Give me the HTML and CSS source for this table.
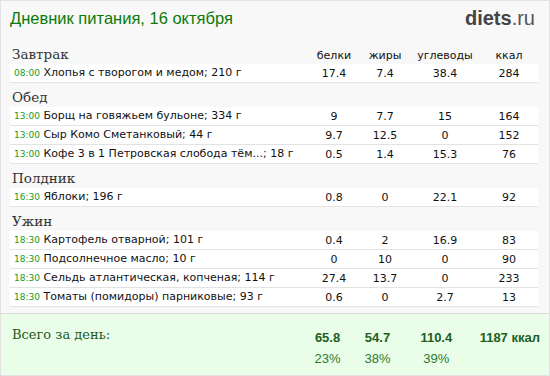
FILE: index.html
```html
<!DOCTYPE html>
<html>
<head>
<meta charset="utf-8">
<link rel="stylesheet" href="styles.css">
</head>
<body>
<div class="card">
  <div class="top">
    <div class="title">Дневник питания, 16 октября</div>
    <div class="logo"><b>diets</b>.ru</div>
  </div>
  <table class="diary">
    <tr class="meal-head">
      <td class="meal">Завтрак</td>
      <td class="colh">белки</td><td class="colh">жиры</td><td class="colh">углеводы</td><td class="colh">ккал</td>
    </tr>
    <tr class="item"><td class="name"><span class="time">08:00</span> Хлопья с творогом и медом; 210 г</td><td>17.4</td><td>7.4</td><td>38.4</td><td>284</td></tr>
    <tr class="meal-head"><td class="meal" colspan="5">Обед</td></tr>
    <tr class="item"><td class="name"><span class="time">13:00</span> Борщ на говяжьем бульоне; 334 г</td><td>9</td><td>7.7</td><td>15</td><td>164</td></tr>
    <tr class="item"><td class="name"><span class="time">13:00</span> Сыр Комо Сметанковый; 44 г</td><td>9.7</td><td>12.5</td><td>0</td><td>152</td></tr>
    <tr class="item"><td class="name"><span class="time">13:00</span> Кофе 3 в 1 Петровская слобода тём...; 18 г</td><td>0.5</td><td>1.4</td><td>15.3</td><td>76</td></tr>
    <tr class="meal-head"><td class="meal" colspan="5">Полдник</td></tr>
    <tr class="item"><td class="name"><span class="time">16:30</span> Яблоки; 196 г</td><td>0.8</td><td>0</td><td>22.1</td><td>92</td></tr>
    <tr class="meal-head"><td class="meal" colspan="5">Ужин</td></tr>
    <tr class="item"><td class="name"><span class="time">18:30</span> Картофель отварной; 101 г</td><td>0.4</td><td>2</td><td>16.9</td><td>83</td></tr>
    <tr class="item"><td class="name"><span class="time">18:30</span> Подсолнечное масло; 10 г</td><td>0</td><td>10</td><td>0</td><td>90</td></tr>
    <tr class="item"><td class="name"><span class="time">18:30</span> Сельдь атлантическая, копченая; 114 г</td><td>27.4</td><td>13.7</td><td>0</td><td>233</td></tr>
    <tr class="item"><td class="name"><span class="time">18:30</span> Томаты (помидоры) парниковые; 93 г</td><td>0.6</td><td>0</td><td>2.7</td><td>13</td></tr>
  </table>
  <div class="totals">
    <div class="total-label">Всего за день:</div>
    <div class="tcol"><div class="tv">65.8</div><div class="tp">23%</div></div>
    <div class="tcol"><div class="tv">54.7</div><div class="tp">38%</div></div>
    <div class="tcol"><div class="tv">110.4</div><div class="tp">39%</div></div>
    <div class="tcol kcal"><div class="tv">1187 ккал</div></div>
  </div>
</div>
</body>
</html>
```

FILE: styles.css
```css
html, body { margin: 0; padding: 0; }
body { width: 550px; height: 376px; overflow: hidden; }
.card {
  box-sizing: border-box;
  width: 550px; height: 376px;
  border: 1px solid #e2e2e2;
  background: #f8f8f8;
  display: flex; flex-direction: column;
}
.top {
  box-sizing: border-box;
  display: flex; justify-content: space-between; align-items: flex-start;
  padding: 6px 14px 0 9px;
  height: 39px;
  flex: none;
}
.title {
  font-family: "Liberation Sans", Arial, sans-serif;
  font-size: 16.5px;
  color: #0b7a0b;
  line-height: 22px;
}
.logo {
  font-family: "Liberation Sans", Arial, sans-serif;
  font-size: 20px;
  color: #555;
  line-height: 22px;
}
.logo b { color: #444; }
.diary {
  margin: 0 12px 0 9px;
  border-collapse: collapse;
  width: 528px;
  font-family: "DejaVu Sans", Verdana, sans-serif;
  font-size: 11px;
  color: #111;
}
.diary td { padding: 0; }
.meal-head td { height: 24px; vertical-align: bottom; }
.meal {
  font-family: "DejaVu Serif", Georgia, serif;
  font-size: 13.5px;
  color: #333;
  padding-left: 2px !important;
  line-height: 20px;
}
.colh {
  text-align: center;
  font-size: 11px;
  color: #111;
  line-height: 16px;
}
.item td {
  background: #fff;
  border-bottom: 1px solid #e3e3e3;
  height: 17px;
  text-align: center;
  line-height: 17px;
}
.item td.name { text-align: left; padding-left: 4px; width: 294px; white-space: nowrap; }
.diary td:nth-child(2) { width: 52px; }
.diary td:nth-child(3) { width: 50px; }
.diary td:nth-child(4) { width: 70px; }
.time {
  font-size: 9px;
  color: #1a9a1a;
}
.totals {
  margin-top: auto;
  border-top: 1px solid #dcdcdc;
  background: #eafde8;
  height: 62px;
  display: flex;
  padding: 11px 0 0 11px;
  box-sizing: border-box;
}
.total-label {
  font-family: "DejaVu Serif", Georgia, serif;
  font-size: 13px;
  color: #1e5a1e;
  width: 296px;
  line-height: 20px;
}
.tcol {
  font-family: "Liberation Sans", Arial, sans-serif;
  font-size: 13px;
  text-align: center;
  padding-top: 4px;
}
.tcol:nth-child(2) { width: 52px; }
.tcol:nth-child(3) { width: 50px; }
.tcol:nth-child(4) { width: 70px; }
.tcol.kcal { width: 80px; }
.tv { font-weight: bold; color: #1d5f1d; line-height: 17px; }
.tp { color: #2f7a2f; line-height: 17px; margin-top: 4px; }
```
